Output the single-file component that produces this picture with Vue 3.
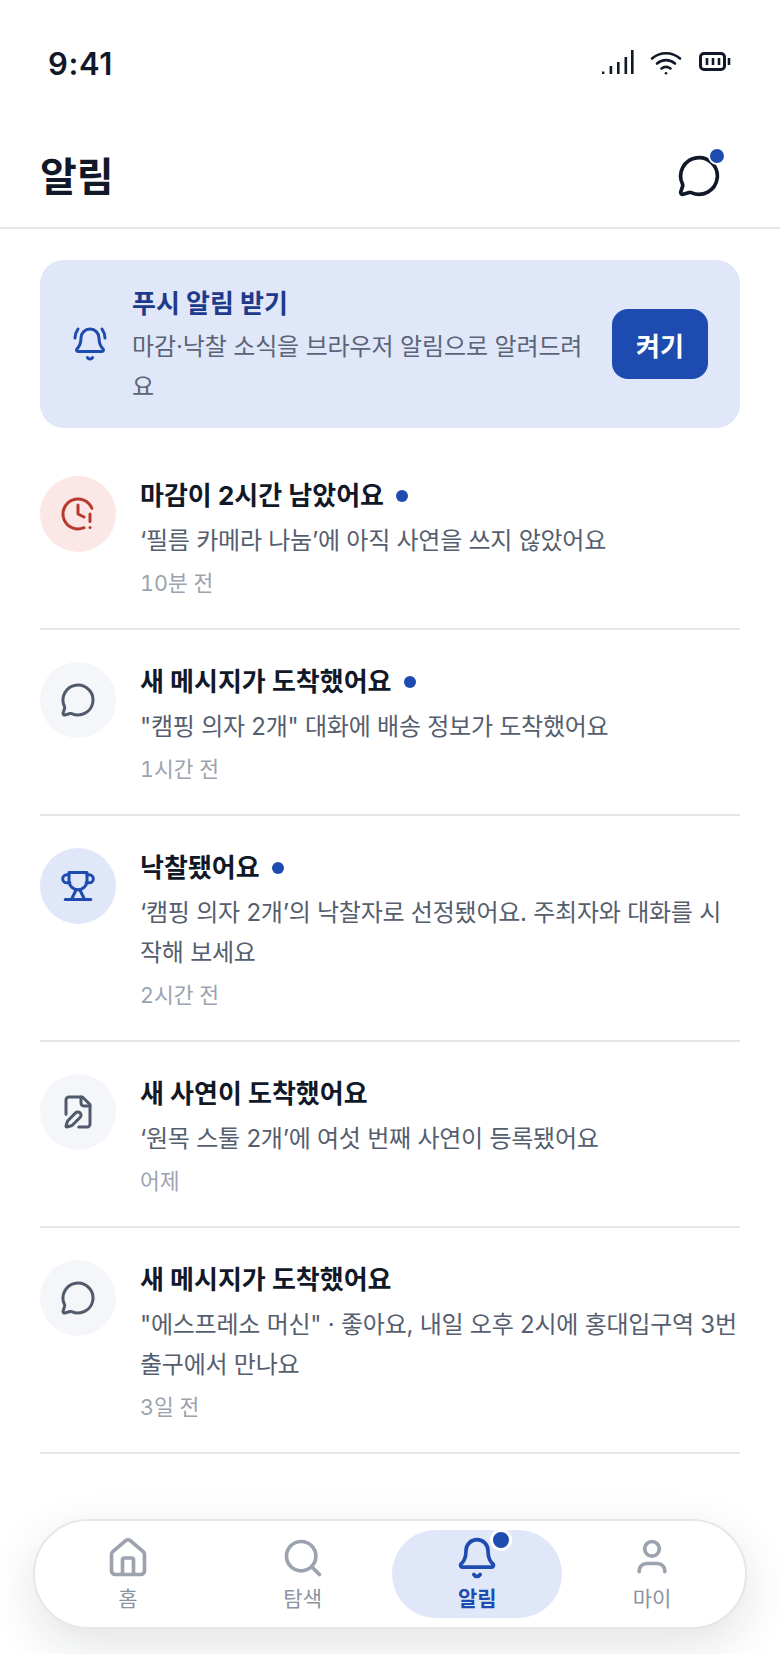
<script setup>
const items = [
  { id: 1, tone: 'red', icon: 'clock', title: '마감이 2시간 남았어요', unread: true, body: '‘필름 카메라 나눔’에 아직 사연을 쓰지 않았어요', time: '10분 전' },
  { id: 2, tone: 'gray', icon: 'chat', title: '새 메시지가 도착했어요', unread: true, body: '"캠핑 의자 2개" 대화에 배송 정보가 도착했어요', time: '1시간 전' },
  { id: 3, tone: 'blue', icon: 'trophy', title: '낙찰됐어요', unread: true, body: '‘캠핑 의자 2개’의 낙찰자로 선정됐어요. 주최자와 대화를 시작해 보세요', time: '2시간 전' },
  { id: 4, tone: 'gray', icon: 'file', title: '새 사연이 도착했어요', unread: false, body: '‘원목 스툴 2개’에 여섯 번째 사연이 등록됐어요', time: '어제' },
  { id: 5, tone: 'gray', icon: 'chat', title: '새 메시지가 도착했어요', unread: false, body: '"에스프레소 머신" · 좋아요, 내일 오후 2시에 홍대입구역 3번 출구에서 만나요', time: '3일 전' },
]
</script>

<template>
  <div class="page">
    <div class="status">
      <span class="clock">9:41</span>
      <div class="status-icons">
        <svg width="32" height="26" viewBox="0 0 32 26" fill="#111827">
          <rect x="0" y="22.5" width="2.4" height="2.5" />
          <rect x="7.6" y="17" width="2.6" height="8" />
          <rect x="15" y="13" width="2.6" height="12" />
          <rect x="22.5" y="8" width="2.6" height="17" />
          <rect x="29" y="1" width="2.6" height="24" />
        </svg>
        <svg class="wifi" width="32" height="26" viewBox="0 0 32 26" fill="none" stroke="#111827" stroke-width="2.6" stroke-linecap="round">
          <path d="M2 9.5C10 2.5 22 2.5 30 9.5" />
          <path d="M7 14.5C12.5 10 19.5 10 25 14.5" />
          <path d="M11.5 19.5C14.2 17.5 17.8 17.5 20.5 19.5" />
          <path d="M16 24.2v.1" />
        </svg>
        <svg width="32" height="22" viewBox="0 0 32 22" fill="none" stroke="#111827" stroke-width="3">
          <rect x="1.5" y="2.5" width="24" height="16" rx="3.5" />
          <path d="M8 7v7M14 7v7M20 7v7M30 7v7" stroke-width="2.6" />
        </svg>
      </div>
    </div>

    <header class="head">
      <h1>알림</h1>
      <div class="head-btn">
        <svg width="44" height="44" viewBox="0 0 24 24" fill="none" stroke="#111827" stroke-width="2" stroke-linecap="round" stroke-linejoin="round">
          <path d="M2.992 16.342a2 2 0 0 1 .094 1.167l-1.065 3.29a1 1 0 0 0 1.236 1.168l3.413-.998a2 2 0 0 1 1.099.092 10 10 0 1 0-4.777-4.719" />
        </svg>
        <span class="head-dot"></span>
      </div>
    </header>

    <main class="content">
      <section class="push">
        <svg class="push-icon" width="36" height="36" viewBox="0 0 24 24" fill="none" stroke="#1e4bb0" stroke-width="2" stroke-linecap="round" stroke-linejoin="round">
          <path d="M10.268 21a2 2 0 0 0 3.464 0" />
          <path d="M22 8c0-2.3-.8-4.3-2-6" />
          <path d="M3.262 15.326A1 1 0 0 0 4 17h16a1 1 0 0 0 .74-1.673C19.41 13.956 18 12.499 18 8A6 6 0 0 0 6 8c0 4.499-1.411 5.956-2.738 7.326" />
          <path d="M4 2C2.8 3.7 2 5.7 2 8" />
        </svg>
        <div class="push-text">
          <div class="push-title">푸시 알림 받기</div>
          <div class="push-sub">마감·낙찰 소식을 브라우저 알림으로 알려드려요</div>
        </div>
        <button class="push-btn">켜기</button>
      </section>

      <ul class="list">
        <li v-for="item in items" :key="item.id" class="row">
          <div class="badge" :class="item.tone">
            <svg width="36" height="36" viewBox="0 0 24 24" fill="none" stroke="currentColor" stroke-width="2" stroke-linecap="round" stroke-linejoin="round">
              <template v-if="item.icon === 'clock'">
                <path d="M12 6v6l4 2" />
                <path d="M20 12v5" />
                <path d="M20 21h.01" />
                <path d="M21.25 8.2A10 10 0 1 0 16 21.16" />
              </template>
              <path v-else-if="item.icon === 'chat'" d="M2.992 16.342a2 2 0 0 1 .094 1.167l-1.065 3.29a1 1 0 0 0 1.236 1.168l3.413-.998a2 2 0 0 1 1.099.092 10 10 0 1 0-4.777-4.719" />
              <template v-else-if="item.icon === 'trophy'">
                <path d="M6 4.5H4.5a2.7 2.7 0 0 0 0 5.4H6.6" />
                <path d="M18 4.5h1.5a2.7 2.7 0 0 1 0 5.4H17.4" />
                <path d="M6 3h12v5.5a6 6 0 0 1-12 0V3Z" />
                <path d="M10.8 14.5 7.6 21" />
                <path d="M13.2 14.5 16.4 21" />
                <path d="M3.5 21h17" />
              </template>
              <template v-else>
                <path d="M12.5 22H18a2 2 0 0 0 2-2V7l-5-5H6a2 2 0 0 0-2 2v9.5" />
                <path d="M14 2v4a2 2 0 0 0 2 2h4" />
                <path d="M13.378 15.626a1 1 0 1 0-3.004-3.004l-5.01 5.012a2 2 0 0 0-.506.854l-.837 2.87a.5.5 0 0 0 .62.62l2.87-.837a2 2 0 0 0 .854-.506z" />
              </template>
            </svg>
          </div>
          <div class="row-text">
            <div class="row-title">
              <span>{{ item.title }}</span>
              <i v-if="item.unread" class="unread"></i>
            </div>
            <p class="row-body">{{ item.body }}</p>
            <div class="row-time">{{ item.time }}</div>
          </div>
        </li>
      </ul>
    </main>

    <nav class="nav">
      <div class="tab">
        <svg width="44" height="44" viewBox="0 0 24 24" fill="none" stroke="currentColor" stroke-width="2" stroke-linecap="round" stroke-linejoin="round">
          <path d="M15 21v-8a1 1 0 0 0-1-1h-4a1 1 0 0 0-1 1v8" />
          <path d="M3 10a2 2 0 0 1 .709-1.528l7-5.999a2 2 0 0 1 2.582 0l7 5.999A2 2 0 0 1 21 10v9a2 2 0 0 1-2 2H5a2 2 0 0 1-2-2z" />
        </svg>
        <span>홈</span>
      </div>
      <div class="tab">
        <svg width="44" height="44" viewBox="0 0 24 24" fill="none" stroke="currentColor" stroke-width="2" stroke-linecap="round" stroke-linejoin="round">
          <circle cx="11" cy="11" r="8" />
          <path d="m21 21-4.3-4.3" />
        </svg>
        <span>탐색</span>
      </div>
      <div class="tab active">
        <div class="tab-icon">
          <svg width="44" height="44" viewBox="0 0 24 24" fill="none" stroke="currentColor" stroke-width="2" stroke-linecap="round" stroke-linejoin="round">
            <path d="M10.268 21a2 2 0 0 0 3.464 0" />
            <path d="M3.262 15.326A1 1 0 0 0 4 17h16a1 1 0 0 0 .74-1.673C19.41 13.956 18 12.499 18 8A6 6 0 0 0 6 8c0 4.499-1.411 5.956-2.738 7.326" />
          </svg>
          <i class="tab-dot"></i>
        </div>
        <span>알림</span>
      </div>
      <div class="tab">
        <svg width="44" height="44" viewBox="0 0 24 24" fill="none" stroke="currentColor" stroke-width="2" stroke-linecap="round" stroke-linejoin="round">
          <path d="M19 19.5v-.5a4 4 0 0 0-4-4H9a4 4 0 0 0-4 4v.5" />
          <circle cx="12" cy="7" r="4" />
        </svg>
        <span>마이</span>
      </div>
    </nav>
  </div>
</template>

<style>
html, body { margin: 0; background: #fff; }
</style>

<style scoped>
.page {
  position: relative;
  width: 780px;
  height: 1654px;
  overflow: hidden;
  background: #fff;
  color: #111827;
  font-family: Inter, "Noto Sans CJK KR", sans-serif;
}
.status {
  height: 126px;
  box-sizing: border-box;
  padding: 46px 49px 0 48px;
  display: flex;
  justify-content: space-between;
  align-items: flex-start;
}
.clock { font-size: 31px; font-weight: 600; line-height: 36px; letter-spacing: 0.6px; }
.status-icons { display: flex; align-items: center; gap: 17px; padding-top: 3px; }
.status-icons svg:first-child { margin-right: -1px; }
.head {
  height: 101px;
  padding: 0 59px 0 40px;
  display: flex;
  justify-content: space-between;
  align-items: center;
  border-bottom: 2px solid #e5e7eb;
}
h1 { margin: 0; font-size: 40px; font-weight: 700; line-height: 50px; }
.head-btn { position: relative; width: 44px; height: 44px; top: -1px; }
.head-btn svg { display: block; }
.head-dot {
  position: absolute;
  right: -5px;
  top: -7px;
  width: 14px;
  height: 14px;
  border-radius: 50%;
  background: #1e4bb0;
  border: 2px solid #fff;
}
.content { padding: 31px 40px 0; }
.push {
  display: flex;
  align-items: center;
  height: 168px;
  box-sizing: border-box;
  padding: 0 32px 0 32px;
  background: #e0e7f8;
  border-radius: 24px;
}
.push-icon { flex: none; margin-right: 24px; }
.push-text { flex: 1; min-width: 0; padding-top: 5px; }
.push-title { font-size: 26px; font-weight: 700; line-height: 36px; color: #1e3a8a; }
.push-sub { font-size: 24px; line-height: 40px; color: #5b6478; margin-top: 5px; letter-spacing: -0.13px; }
.push-btn {
  flex: none;
  width: 96px;
  height: 70px;
  margin-left: 22px;
  border: 0;
  border-radius: 16px;
  background: #1e4bb0;
  color: #fff;
  font: 700 26px Inter, "Noto Sans CJK KR", sans-serif;
}
.list { list-style: none; margin: 16px 0 0; padding: 0; }
.row {
  display: flex;
  gap: 24px;
  padding: 32px 0;
  border-bottom: 2px solid #e5e7eb;
}
.badge {
  flex: none;
  width: 76px;
  height: 76px;
  border-radius: 50%;
  display: flex;
  align-items: center;
  justify-content: center;
}
.red { background: #fbe7e5; color: #b83a2e; }
.gray { background: #f4f6fa; color: #515a6a; }
.blue { background: #e0e7f8; color: #1e4bb0; }
.row-text { flex: 1; min-width: 0; }
.row-title { display: flex; align-items: center; gap: 12px; font-size: 26px; font-weight: 700; line-height: 40px; }
.unread { width: 12px; height: 12px; border-radius: 50%; background: #1e4bb0; }
.row-body { margin: 5px 0 0; font-size: 24px; line-height: 40px; color: #555e6e; letter-spacing: -0.24px; }
.row-time { margin-top: 9px; font-size: 21.5px; line-height: 26px; color: #9ca3af; font-feature-settings: "tnum"; }
.nav {
  position: absolute;
  left: 33px;
  top: 1519px;
  width: 714px;
  height: 110px;
  box-sizing: border-box;
  padding: 9px 8px;
  display: grid;
  grid-template-columns: repeat(4, 170px);
  column-gap: 4.7px;
  background: #fff;
  border: 2px solid #e5e7eb;
  border-radius: 56px;
  box-shadow: 0 16px 48px rgba(17, 24, 39, 0.12);
}
.tab {
  display: flex;
  flex-direction: column;
  align-items: center;
  justify-content: center;
  color: #9ca3af;
  border-radius: 44px;
  font-size: 21px;
  line-height: 28px;
}
.tab svg { display: block; margin-bottom: 5px; }
.tab span { color: #8b93a1; }
.tab.active { background: #e0e7f8; color: #1e4bb0; }
.tab.active span { color: #1e4bb0; font-weight: 600; }
.tab-icon { position: relative; }
.tab-dot {
  position: absolute;
  right: -13px;
  top: -7px;
  width: 16px;
  height: 16px;
  border-radius: 50%;
  background: #1e4bb0;
  border: 3px solid #fff;
}
</style>
